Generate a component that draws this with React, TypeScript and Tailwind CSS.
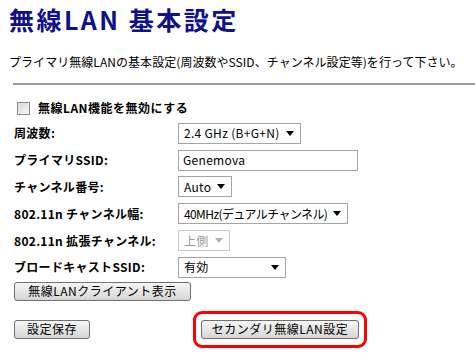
const font = { fontFamily: '"Noto Sans CJK JP", "Liberation Sans", sans-serif' }

function Select({ value, width, disabled, tight }: { value: string; width: string; disabled?: boolean; tight?: boolean }) {
  return (
    <div
      className={`flex h-[21px] items-center justify-between border bg-white pl-[5px] pr-[6px] text-[12px] ${width} ${
        disabled ? "border-[#c8c8c8] text-[#9a9a9a]" : "border-[#a5a5a5] text-black"
      }`}
    >
      <span className={`whitespace-nowrap ${tight ? "tracking-[-0.6px]" : "tracking-[0.3px]"}`}>{value}</span>
      <svg width="8" height="5" viewBox="0 0 8 5" className="ml-1 shrink-0">
        <path d="M0 0h8L4 5z" fill={disabled ? "#b0b0b0" : "#000"} />
      </svg>
    </div>
  )
}

function Button({ children, className = "" }: { children: React.ReactNode; className?: string }) {
  return (
    <button
      className={`block h-[19px] rounded-[3px] border border-[#707070] bg-gradient-to-b from-[#f6f6f6] to-[#d6d6d6] text-[12px] leading-none tracking-[0.5px] text-black ${className}`}
    >
      {children}
    </button>
  )
}

export default function App() {
  const rows: { label: string; field: React.ReactNode }[] = [
    { label: "周波数:", field: <Select value="2.4 GHz (B+G+N)" width="w-[123px]" /> },
    {
      label: "プライマリSSID:",
      field: (
        <div className="flex h-[21px] w-[180px] items-center border border-[#a5a5a5] bg-white pl-[4px] text-[12px] tracking-[0.3px]">
          Genemova
        </div>
      ),
    },
    { label: "チャンネル番号:", field: <Select value="Auto" width="w-[54px]" /> },
    { label: "802.11n チャンネル幅:", field: <Select value="40MHz(デュアルチャンネル)" width="w-[170px]" tight /> },
    { label: "802.11n 拡張チャンネル:", field: <Select value="上側" width="w-[52px]" disabled /> },
    { label: "ブロードキャストSSID:", field: <Select value="有効" width="w-[108px]" /> },
  ]

  return (
    <div className="h-[355px] w-[475px] overflow-hidden bg-white text-black" style={font}>
      <h1 className="pl-[9px] pt-[5px] text-[25px] font-bold leading-[28px] tracking-[2.5px] text-[#10108c]">
        無線LAN 基本設定
      </h1>

      <p className="mt-[21px] whitespace-nowrap pl-[9px] text-[12px] leading-[16px] tracking-[0.05px]">
        プライマリ無線LANの基本設定(周波数やSSID、チャンネル設定等)を行って下さい。
      </p>

      <div className="ml-[13px] mt-[13px] h-[2px] bg-[#9a9a9a]" />

      <div className="mt-[14px] flex items-center pl-[17px]">
        <div className="h-[13px] w-[13px] border border-[#8a8a8a] bg-gradient-to-br from-[#dcdcdc] to-[#f8f8f8]" />
        <span className="ml-[8px] text-[12px] font-bold tracking-[0.5px]">無線LAN機能を無効にする</span>
      </div>

      <div className="mt-[3px] flex flex-col">
        {rows.map((r) => (
          <div key={r.label} className="flex h-[26.8px] items-center">
            <span className="w-[178px] shrink-0 pl-[14px] text-[12px] font-bold tracking-[0.3px]">{r.label}</span>
            {r.field}
          </div>
        ))}
      </div>

      <div className="mt-[1px] pl-[14px]">
        <Button className="w-[177px]">無線LANクライアント表示</Button>
      </div>

      <div className="mt-[10px] flex items-center pl-[14px]">
        <Button className="w-[76px]">設定保存</Button>
        <div className="ml-[103px] rounded-[9px] border-[3px] border-[#ff0000] px-[5px] py-[6px]">
          <Button className="w-[158px]">セカンダリ無線LAN設定</Button>
        </div>
      </div>
    </div>
  )
}
